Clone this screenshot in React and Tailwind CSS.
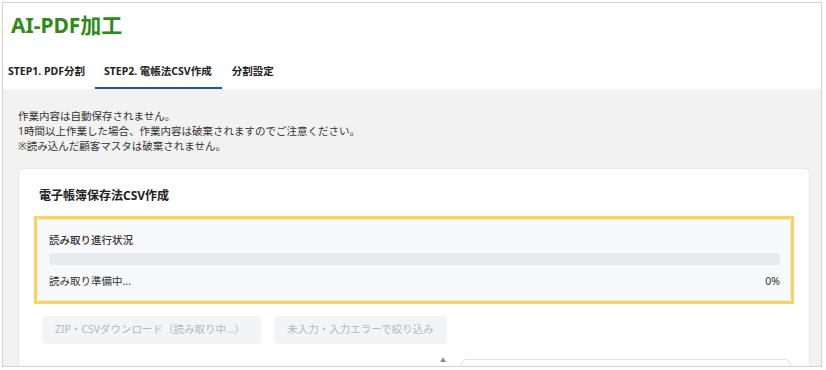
import React from 'react';

const font = { fontFamily: '"Noto Sans", "Noto Sans CJK JP", sans-serif' };

const tabs = [
    { label: 'STEP1. PDF分割', pad: 'pl-[5px] pr-[10px]', active: false },
    { label: 'STEP2. 電帳法CSV作成', pad: 'pl-[9px] pr-[10px]', active: true },
    { label: '分割設定', pad: 'px-[10px]', active: false },
];

const App = () => {
    return (
        <div className="w-[826px] h-[370px] bg-white pl-[2px] pt-[2px] pr-[4px] pb-[3px]" style={font}>
            <div className="h-full border border-[#d2d2d2] flex flex-col overflow-hidden">
                {/* Header */}
                <div className="bg-white">
                    <h1 className="pl-[8px] pt-[6px] text-[21px] leading-[32px] font-bold text-[#2e8b17]">
                        AI-PDF加工
                    </h1>
                    <div className="flex mt-[15px]">
                        {tabs.map((tab) => (
                            <div
                                key={tab.label}
                                className={`${tab.pad} h-[33px] flex items-center text-[10.5px] font-bold text-[#222] border-b-2 ${
                                    tab.active ? 'border-[#2450a8]' : 'border-transparent'
                                }`}
                            >
                                {tab.label}
                            </div>
                        ))}
                    </div>
                </div>

                {/* Body */}
                <div className="flex-1 bg-[#f2f2f2] pl-[15px] pr-[11px] pt-[20px]">
                    <div className="text-[10.5px] leading-[15px] text-[#333]">
                        <p>作業内容は自動保存されません。</p>
                        <p>1時間以上作業した場合、作業内容は破棄されますのでご注意ください。</p>
                        <p>※読み込んだ顧客マスタは破棄されません。</p>
                    </div>

                    <div className="mt-[14px] bg-white rounded-t-[6px] border border-[#e8e8e8] border-b-0 h-[220px] px-[15px] pt-[18px]">
                        <h2 className="pl-[5px] text-[12px] leading-[18px] font-bold text-[#222]">
                            電子帳簿保存法CSV作成
                        </h2>

                        {/* Progress */}
                        <div className="mt-[11px] border-[3px] border-[#f9d45c]">
                            <div className="bg-[#f8f9fa] border border-[#e6e8ea] rounded-[3px] pl-[11px] pr-[10px] pt-[12px] pb-[11px]">
                                <p className="text-[10.5px] leading-[16px] font-medium text-[#333]">読み取り進行状況</p>
                                <div className="mt-[5px] h-[12px] rounded-[3px] bg-[#e8eaed]" />
                                <div className="mt-[8px] flex justify-between text-[10.5px] leading-[16px] text-[#333]">
                                    <span>読み取り準備中...</span>
                                    <span>0%</span>
                                </div>
                            </div>
                        </div>

                        {/* Buttons */}
                        <div className="mt-[12px] pl-[8px] flex gap-[13px]">
                            <button disabled className="h-[28px] w-[219px] rounded-[4px] bg-[#f3f4f6] text-[10.5px] text-[#b8b8b8] text-left pl-[13px]">
                                ZIP・CSVダウンロード（読み取り中...）
                            </button>
                            <button disabled className="h-[28px] w-[173px] rounded-[4px] bg-[#f3f4f6] text-[10.5px] text-[#b8b8b8]">
                                未入力・入力エラーで絞り込み
                            </button>
                        </div>

                        {/* Filter row */}
                        <div className="mt-[15px] flex items-start">
                            <span className="ml-[406px] mt-[-2px] text-[6px] leading-[6px] text-[#888]">▲</span>
                            <div className="ml-[15px] w-[330px] h-[10px] rounded-t-[6px] border border-[#e2e2e2] border-b-0" />
                        </div>
                    </div>
                </div>
            </div>
        </div>
    );
};

export default App;
